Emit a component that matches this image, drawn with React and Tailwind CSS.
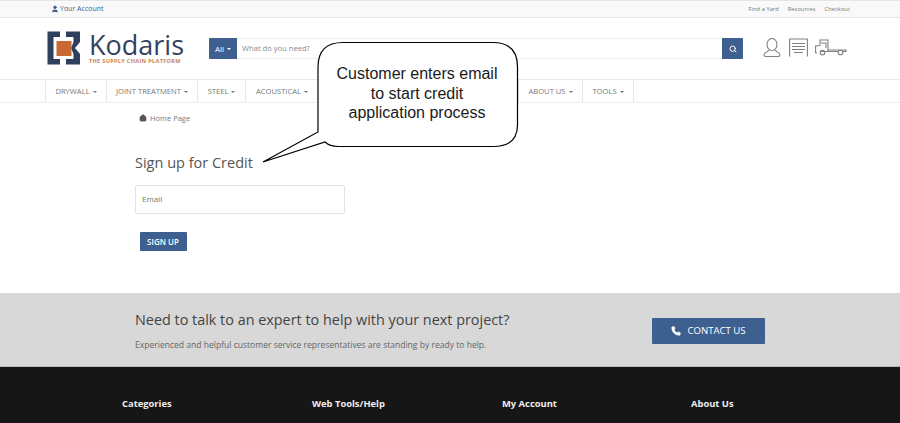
import React from "react";
import { Search, Phone, User, Home } from "lucide-react";

const sans = "font-['Open_Sans','Noto_Sans',sans-serif]";

function Caret() {
  return <span className="ml-[3px] inline-block border-x-[2px] border-t-[2px] border-x-transparent border-t-current align-middle" />;
}

function NavItem({ label, w }) {
  return (
    <div style={{ width: w }} className="flex h-full items-center justify-center border-r border-[#e8e8e8] pt-[1px] text-[7.6px] text-[#777]">
      {label}
      <Caret />
    </div>
  );
}

function Logo() {
  return (
    <div className="flex items-start">
      <svg width="34" height="34" viewBox="0 0 34 34" className="shrink-0">
        <path d="M0.5 0.5H13V6H6.5V28H13V33.5H0.5Z" fill="#2f3f5e" />
        <path d="M19 0.5H33V11L28 17L33 23V33.5H19V28H26.5V23L24 17L26.5 11V6H19Z" fill="#2f3f5e" />
        <rect x="9.5" y="10" width="15" height="15" fill="#c96a34" />
      </svg>
      <div className="ml-[8px] flex flex-col pt-[2px]">
        <span className={`${sans} text-[27px] font-medium leading-[23px] text-[#33415f]`}>Kodaris</span>
        <span className={`${sans} mt-[2px] text-[5.6px] font-bold leading-[7px] tracking-[0.3px] text-[#c9825a]`}>THE SUPPLY CHAIN PLATFORM</span>
      </div>
    </div>
  );
}

function Callout() {
  return (
    <div className="absolute left-[255px] top-[35px] h-[135px] w-[270px]">
      <svg width="270" height="135" viewBox="0 0 270 135" className="absolute inset-0">
        <path
          d="M88 7.5H238Q262.5 7.5 262.5 32V90Q262.5 111.5 238 111.5H83Q75 111.5 70 107L8 127L63 97V32Q63 7.5 88 7.5Z"
          fill="#fff"
          stroke="#000"
          strokeWidth="1.2"
        />
      </svg>
      <div className="absolute left-[62px] top-[29px] w-[200px] text-center font-['Liberation_Sans',Arial,sans-serif] text-[16px] leading-[19.5px] text-[#1a1a1a]">
        Customer enters email
        <br />
        to start credit
        <br />
        application process
      </div>
    </div>
  );
}

export default function App() {
  return (
    <div className={`${sans} relative h-[423px] w-[900px] overflow-hidden bg-white`}>
      {/* top bar */}
      <div className="flex h-[18px] items-center justify-between border-y border-[#e6e6e6] bg-[#f9f9f9] pl-[51px] pr-[50px] text-[7px]">
        <div className="flex items-center text-[#3d5f8f]">
          <User size={8} fill="#3d5f8f" strokeWidth={2} />
          <span className="ml-[1px]">Your Account</span>
        </div>
        <div className="flex gap-[9px] text-[5.8px] text-[#777]">
          <span>Find a Yard</span>
          <span>Resources</span>
          <span>Checkout</span>
        </div>
      </div>

      {/* header */}
      <div className="flex h-[62px] items-start border-b border-[#e8e8e8] pl-[47px]">
        <div className="mt-[13px] w-[162px]">
          <Logo />
        </div>
        <div className="mt-[20px] flex h-[21px] w-[534px]">
          <div className="flex w-[28px] items-center justify-center rounded-l-[1px] bg-[#3d6091] text-[8px] text-white">
            All
            <Caret />
          </div>
          <div className="flex flex-1 items-center border-y border-[#eee] pl-[5px] text-[7.6px] text-[#888]">What do you need?</div>
          <div className="flex w-[21px] items-center justify-center rounded-r-[1px] bg-[#3d6091]">
            <Search size={8} color="#fff" strokeWidth={3} />
          </div>
        </div>
        <div className="ml-[20px] mt-[20px] flex items-start">
          <svg width="18" height="19" viewBox="0 0 18 19" fill="none" stroke="#808080" strokeWidth="1.1">
            <ellipse cx="9" cy="6.5" rx="5" ry="6" />
            <path d="M6.5 11.5C6 14 1 13.5 1 17C1 18 2 18.5 3 18.5H15C16 18.5 17 18 17 17C17 13.5 12 14 11.5 11.5" />
          </svg>
          <svg width="19" height="19" viewBox="0 0 19 19" fill="none" stroke="#808080" strokeWidth="1.1" className="ml-[8px]">
            <path d="M.6 18.5V1H18.4V18.5" />
            <path d="M3 5.5H16M3 8.5H16M3 11.5H16M5 14.5H14" />
          </svg>
          <svg width="32" height="17" viewBox="0 0 32 17" fill="none" stroke="#808080" strokeWidth="1.1" className="ml-[7px] mt-[1px]">
            <path d="M.6 14V7L5 6.5V1H13V12.5H5.5M9.5 12.5H23M28 12.5H31V11H13" />
            <path d="M2 14H.6M6 4H11V9" />
            <circle cx="7.5" cy="13.5" r="2.3" />
            <circle cx="25.5" cy="13.5" r="2.3" />
          </svg>
        </div>
      </div>

      {/* nav */}
      <div className="h-[23px] border-b border-[#eee]">
        <div className="ml-[45px] flex h-full border-l border-[#e8e8e8]">
          <NavItem label="DRYWALL" w={61} />
          <NavItem label="JOINT TREATMENT" w={91} />
          <NavItem label="STEEL" w={48} />
          <NavItem label="ACOUSTICAL" w={73} />
          <div className="w-[200px] border-r border-[#e8e8e8]" />
          <NavItem label="ABOUT US" w={64} />
          <NavItem label="TOOLS" w={51} />
        </div>
      </div>

      {/* main */}
      <main className="h-[190px] pl-[135px]">
        <div className="flex items-center pl-[4px] pt-[9px] text-[7.5px] leading-[12px] text-[#777]">
          <Home size={8} fill="#555" color="#555" />
          <span className="ml-[3px]">Home Page</span>
        </div>
        <h1 className="mt-[28px] text-[14.5px] leading-[22px] text-[#555]">Sign up for Credit</h1>
        <div className="mt-[11px] flex h-[29px] w-[210px] items-center rounded-[2px] border border-[#e2e2e2] pb-[2px] pl-[6px] text-[8px] text-[#777]">Email</div>
        <div className="ml-[4.5px] mt-[18px] flex h-[19px] w-[47px] items-center justify-center rounded-[1px] bg-[#3d6091] text-[8px] font-semibold text-white">SIGN UP</div>
      </main>

      {/* cta */}
      <section className="flex h-[74px] border-b border-[#b8b8b8] bg-[#d8d8d8] pl-[135px]">
        <div className="w-[517px]">
          <h2 className="mt-[16px] text-[14.4px] leading-[22px] text-[#444]">Need to talk to an expert to help with your next project?</h2>
          <p className="mt-[8px] text-[8.55px] leading-[12px] text-[#666]">Experienced and helpful customer service representatives are standing by ready to help.</p>
        </div>
        <div className="mt-[25px] flex h-[26px] w-[113px] items-center justify-center rounded-[1px] bg-[#3d6091] text-[9.6px] text-white">
          <Phone size={10} fill="#fff" color="#fff" />
          <span className="ml-[6px]">CONTACT US</span>
        </div>
      </section>

      {/* footer */}
      <footer className="grid h-[60px] grid-cols-[190px_190px_189px_100px] bg-[#161616] pl-[122px] pt-[30px] text-[9.4px] font-bold leading-[14px] text-[#eee]">
        <span>Categories</span>
        <span>Web Tools/Help</span>
        <span>My Account</span>
        <span>About Us</span>
      </footer>

      <Callout />
    </div>
  );
}
